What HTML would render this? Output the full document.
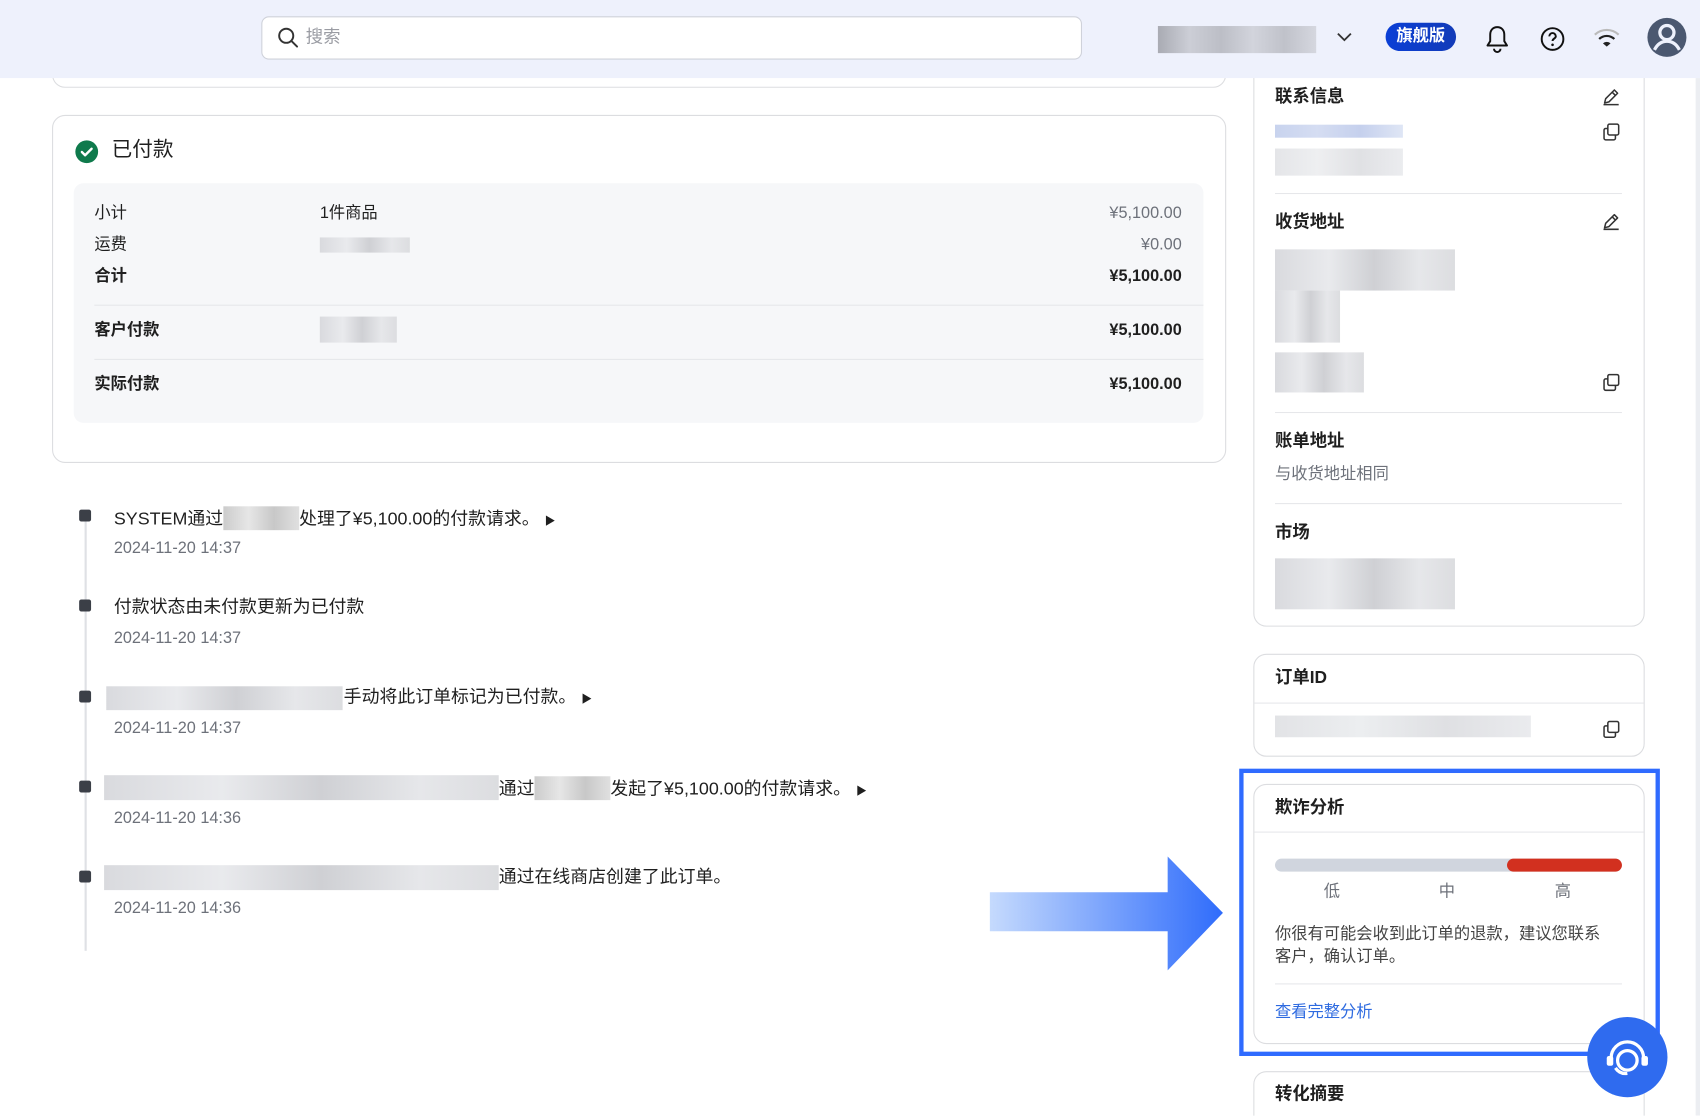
<!DOCTYPE html>
<html><head><meta charset="utf-8"><style>
*{box-sizing:border-box;margin:0;padding:0}
html,body{width:1700px;height:1116px;overflow:hidden;background:#fff}
body{font-family:"Liberation Sans","Noto Sans CJK SC",sans-serif;color:#1f1f1f}
#w{position:absolute;left:0;top:0;width:1568px;height:1029px;transform:scale(1.08418);transform-origin:0 0;background:#fff;overflow:hidden}
.a{position:absolute}
.card{position:absolute;border:1px solid #dcdde0;border-radius:12px;background:#fff}
.t{position:absolute;font-size:15px;white-space:nowrap;line-height:20px}
.b{font-weight:bold}
.g{color:#6d717a}
.blur{position:absolute;background:linear-gradient(90deg,#d9dade,#e9eaed 30%,#cfd0d4 55%,#e6e7ea 80%,#dcdde0)}
.sq{position:absolute;left:73px;width:11px;height:11px;background:#3b3f47;border-radius:2px}
.hl{position:absolute;height:1px;background:#e6e7ea}
.ic{position:absolute}
</style></head><body><div id="w">

<div class="card" style="left:48px;top:40px;width:1083px;height:41px;border-top:none;border-radius:0 0 12px 12px"></div>

<div class="card" style="left:48px;top:106px;width:1083px;height:321px"></div>
<svg class="ic" style="left:69px;top:129px" width="22" height="22" viewBox="0 0 22 22"><circle cx="11" cy="11" r="10.5" fill="#0f7a4c"/><path d="M6.5 11.2l3 3 6-6" fill="none" stroke="#fff" stroke-width="2.2" stroke-linecap="round" stroke-linejoin="round"/></svg>
<div class="t" style="left:103px;top:128px;font-size:19px;line-height:22px">已付款</div>
<div class="a" style="left:68px;top:169px;width:1042px;height:221px;background:#f6f7f9;border-radius:9px"></div>
<div class="t" style="left:87px;top:187px">小计</div>
<div class="t" style="left:295px;top:187px">1件商品</div>
<div class="t g" style="right:478px;top:187px">¥5,100.00</div>
<div class="t" style="left:87px;top:216px">运费</div>
<div class="blur" style="left:295px;top:219px;width:83px;height:14px"></div>
<div class="t g" style="right:478px;top:216px">¥0.00</div>
<div class="t b" style="left:87px;top:245px">合计</div>
<div class="t b" style="right:478px;top:245px">¥5,100.00</div>
<div class="hl" style="left:87px;top:281px;width:1023px"></div>
<div class="t b" style="left:87px;top:295px">客户付款</div>
<div class="blur" style="left:295px;top:292px;width:71px;height:24px"></div>
<div class="t b" style="right:478px;top:295px">¥5,100.00</div>
<div class="hl" style="left:87px;top:331px;width:1023px"></div>
<div class="t b" style="left:87px;top:345px">实际付款</div>
<div class="t b" style="right:478px;top:345px">¥5,100.00</div>

<div class="a" style="left:78px;top:476px;width:2px;height:401px;background:#dfe1e5"></div>
<div class="sq" style="top:470px"></div>
<div class="t" style="left:105px;top:467px;font-size:16.5px">SYSTEM通过<span style="display:inline-block;width:70px;height:22px;vertical-align:-5px;background:linear-gradient(90deg,#ccc,#e6e6e6,#c8c8c8,#e0e0e0)"></span>处理了¥5,100.00的付款请求。 <span style="font-size:10px">▶</span></div>
<div class="t g" style="left:105px;top:496px">2024-11-20 14:37</div>
<div class="sq" style="top:553px"></div>
<div class="t" style="left:105px;top:550px;font-size:16.5px">付款状态由未付款更新为已付款</div>
<div class="t g" style="left:105px;top:579px">2024-11-20 14:37</div>
<div class="sq" style="top:637px"></div>
<div class="blur" style="left:98px;top:633px;width:218px;height:22px"></div>
<div class="t" style="left:317px;top:633px;font-size:16.5px">手动将此订单标记为已付款。 <span style="font-size:10px">▶</span></div>
<div class="t g" style="left:105px;top:662px">2024-11-20 14:37</div>
<div class="sq" style="top:720px"></div>
<div class="blur" style="left:96px;top:715px;width:364px;height:23px"></div>
<div class="t" style="left:460px;top:716px;font-size:16.5px">通过<span style="display:inline-block;width:70px;height:22px;vertical-align:-5px;background:linear-gradient(90deg,#ccc,#e6e6e6,#c8c8c8,#e0e0e0)"></span>发起了¥5,100.00的付款请求。 <span style="font-size:10px">▶</span></div>
<div class="t g" style="left:105px;top:745px">2024-11-20 14:36</div>
<div class="sq" style="top:803px"></div>
<div class="blur" style="left:96px;top:798px;width:364px;height:23px"></div>
<div class="t" style="left:460px;top:799px;font-size:16.5px">通过在线商店创建了此订单。</div>
<div class="t g" style="left:105px;top:828px">2024-11-20 14:36</div>

<svg class="ic" style="left:910px;top:786px" width="225" height="112" viewBox="0 0 225 112"><defs><linearGradient id="ag" x1="0" x2="1"><stop offset="0" stop-color="#c5dafd"/><stop offset="1" stop-color="#2f6cfb"/></linearGradient></defs><path d="M3 37h164V4l51 52-51 53V73H3z" fill="url(#ag)"/></svg>

<div class="card" style="left:1156px;top:40px;width:361px;height:538px"></div>
<div class="t b" style="left:1176px;top:80px;font-size:16px">联系信息</div>
<svg class="ic" style="left:1477px;top:80px" width="18" height="18" viewBox="0 0 18 18"><path d="M3 15l1-4 8-8 3 3-8 8z M10 5l3 3 M2 16.5h14" fill="none" stroke="#333" stroke-width="1.4" stroke-linejoin="round"/></svg>
<svg class="ic" style="left:1478px;top:113px" width="17" height="17" viewBox="0 0 17 17"><rect x="5" y="1.5" width="10" height="10" rx="1.5" fill="none" stroke="#333" stroke-width="1.4"/><path d="M5 5.5H3a1.5 1.5 0 00-1.5 1.5v7.5A1.5 1.5 0 003 16h7.5a1.5 1.5 0 001.5-1.5V12" fill="none" stroke="#333" stroke-width="1.4"/></svg>
<div class="a" style="left:1176px;top:115px;width:118px;height:12px;background:linear-gradient(90deg,#c8d3ee,#d5ddf2,#c5d0ed,#dfe6f5)"></div>
<div class="blur" style="left:1176px;top:137px;width:118px;height:25px;background:linear-gradient(90deg,#e4e5e8,#eeeff1,#e0e1e4,#ebecef)"></div>
<div class="hl" style="left:1176px;top:178px;width:320px"></div>
<div class="t b" style="left:1176px;top:196px;font-size:16px">收货地址</div>
<svg class="ic" style="left:1477px;top:195px" width="18" height="18" viewBox="0 0 18 18"><path d="M3 15l1-4 8-8 3 3-8 8z M10 5l3 3 M2 16.5h14" fill="none" stroke="#333" stroke-width="1.4" stroke-linejoin="round"/></svg>
<div class="blur" style="left:1176px;top:230px;width:166px;height:38px"></div>
<div class="blur" style="left:1176px;top:268px;width:60px;height:48px"></div>
<div class="blur" style="left:1176px;top:325px;width:82px;height:37px"></div>
<svg class="ic" style="left:1478px;top:344px" width="17" height="17" viewBox="0 0 17 17"><rect x="5" y="1.5" width="10" height="10" rx="1.5" fill="none" stroke="#333" stroke-width="1.4"/><path d="M5 5.5H3a1.5 1.5 0 00-1.5 1.5v7.5A1.5 1.5 0 003 16h7.5a1.5 1.5 0 001.5-1.5V12" fill="none" stroke="#333" stroke-width="1.4"/></svg>
<div class="hl" style="left:1176px;top:380px;width:320px"></div>
<div class="t b" style="left:1176px;top:398px;font-size:16px">账单地址</div>
<div class="t g" style="left:1176px;top:428px">与收货地址相同</div>
<div class="hl" style="left:1176px;top:464px;width:320px"></div>
<div class="t b" style="left:1176px;top:482px;font-size:16px">市场</div>
<div class="blur" style="left:1176px;top:515px;width:166px;height:47px"></div>

<div class="card" style="left:1156px;top:603px;width:361px;height:95px"></div>
<div class="t b" style="left:1176px;top:616px;font-size:16px">订单ID</div>
<div class="hl" style="left:1157px;top:648px;width:359px"></div>
<div class="blur" style="left:1176px;top:660px;width:236px;height:20px;background:linear-gradient(90deg,#e2e3e6,#eceef0,#dfe0e3,#eaebee)"></div>
<svg class="ic" style="left:1478px;top:664px" width="17" height="17" viewBox="0 0 17 17"><rect x="5" y="1.5" width="10" height="10" rx="1.5" fill="none" stroke="#333" stroke-width="1.4"/><path d="M5 5.5H3a1.5 1.5 0 00-1.5 1.5v7.5A1.5 1.5 0 003 16h7.5a1.5 1.5 0 001.5-1.5V12" fill="none" stroke="#333" stroke-width="1.4"/></svg>

<div class="card" style="left:1156px;top:723px;width:361px;height:240px"></div>
<div class="t b" style="left:1176px;top:736px;font-size:16px">欺诈分析</div>
<div class="hl" style="left:1157px;top:767px;width:359px"></div>
<div class="a" style="left:1176px;top:792px;width:320px;height:12px;border-radius:6px;background:#d0d5de"></div>
<div class="a" style="left:1390px;top:792px;width:106px;height:12px;border-radius:6px;background:#d2301f"></div>
<div class="t g" style="left:1221px;top:813px">低</div>
<div class="t g" style="left:1327px;top:813px">中</div>
<div class="t g" style="left:1434px;top:813px">高</div>
<div class="a" style="left:1176px;top:851px;width:312px;font-size:15px;line-height:21px;color:#444">你很有可能会收到此订单的退款，建议您联系客户，确认订单。</div>
<div class="hl" style="left:1176px;top:907px;width:320px"></div>
<div class="t" style="left:1176px;top:924px;color:#2d6ae0">查看完整分析</div>
<div class="a" style="left:1143px;top:709px;width:388px;height:265px;border:4px solid #2f6bff"></div>

<div class="card" style="left:1156px;top:988px;width:361px;height:60px"></div>
<div class="t b" style="left:1176px;top:1000px;font-size:16px">转化摘要</div>

<div class="a" style="left:1464px;top:938px;width:74px;height:74px;border-radius:50%;background:#2f6bef"></div>
<svg class="ic" style="left:1464px;top:938px" width="74" height="74" viewBox="0 0 74 74"><path d="M22 38a15 15 0 0130 0" fill="none" stroke="#fff" stroke-width="3"/><circle cx="37" cy="40" r="9" fill="none" stroke="#fff" stroke-width="3"/><rect x="18" y="36" width="6" height="9" rx="2" fill="#fff"/><rect x="50" y="36" width="6" height="9" rx="2" fill="#fff"/><path d="M26 47q4 6 11 5" fill="none" stroke="#fff" stroke-width="3"/></svg>
<div class="a" style="left:1564px;top:72px;width:4px;height:957px;background:#eceef2"></div>

<div class="a" style="left:0;top:0;width:1568px;height:72px;background:#eef1fc"></div>
<div class="a" style="left:241px;top:15px;width:757px;height:40px;background:#fff;border:1px solid #cfd2da;border-radius:7px"></div>
<svg class="ic" style="left:255px;top:24px" width="22" height="22" viewBox="0 0 22 22"><circle cx="9" cy="9" r="6.5" fill="none" stroke="#333" stroke-width="1.8"/><path d="M14 14l5 5" stroke="#333" stroke-width="1.8" stroke-linecap="round"/></svg>
<div class="t" style="left:282px;top:25px;font-size:16px;color:#9a9ca3">搜索</div>
<div class="blur" style="left:1068px;top:24px;width:146px;height:25px;background:linear-gradient(90deg,#a9abb3,#ccced6 20%,#bcbec6 40%,#d2d4dc 60%,#c0c2ca 80%,#d5d7df)"></div>
<svg class="ic" style="left:1231px;top:27px" width="18" height="14"><path d="M3 4l6 6 6-6" fill="none" stroke="#333" stroke-width="1.7"/></svg>
<div class="a" style="left:1278px;top:21px;width:65px;height:26px;border-radius:13px;background:linear-gradient(90deg,#0a3fd6,#123bb8);color:#fff;font-size:15px;font-weight:bold;text-align:center;line-height:26px">旗舰版</div>
<svg class="ic" style="left:1368px;top:22px" width="26" height="28" viewBox="0 0 26 28"><path d="M13 3c-4 0-6.5 3-6.5 7v6l-2.5 4h18l-2.5-4v-6c0-4-2.5-7-6.5-7z" fill="none" stroke="#111" stroke-width="1.8" stroke-linejoin="round"/><path d="M10 23a3 3 0 006 0" fill="none" stroke="#111" stroke-width="1.8"/></svg>
<svg class="ic" style="left:1420px;top:24px" width="24" height="24" viewBox="0 0 24 24"><circle cx="12" cy="12" r="10" fill="none" stroke="#111" stroke-width="1.8"/><path d="M9 9.5a3 3 0 116 0c0 2-3 2.2-3 4.3" fill="none" stroke="#111" stroke-width="1.8"/><circle cx="12" cy="17.3" r="1.2" fill="#111"/></svg>
<svg class="ic" style="left:1468px;top:24px" width="28" height="22" viewBox="0 0 28 22"><path d="M3 8a16 16 0 0122 0" fill="none" stroke="#bbb" stroke-width="2"/><path d="M7 12a10 10 0 0114 0" fill="none" stroke="#222" stroke-width="2"/><path d="M10.5 16l3.5 3 3.5-3a5 5 0 00-7 0z" fill="#222"/></svg>
<svg class="ic" style="left:1519px;top:16px" width="37" height="37" viewBox="0 0 37 37"><circle cx="18.5" cy="18.5" r="18" fill="#4b5870"/><circle cx="18.5" cy="14" r="6.5" fill="none" stroke="#eef1fc" stroke-width="3"/><path d="M7 30c3-6 7-8 11.5-8s8.5 2 11.5 8" fill="none" stroke="#eef1fc" stroke-width="3"/></svg>
</div></body></html>
